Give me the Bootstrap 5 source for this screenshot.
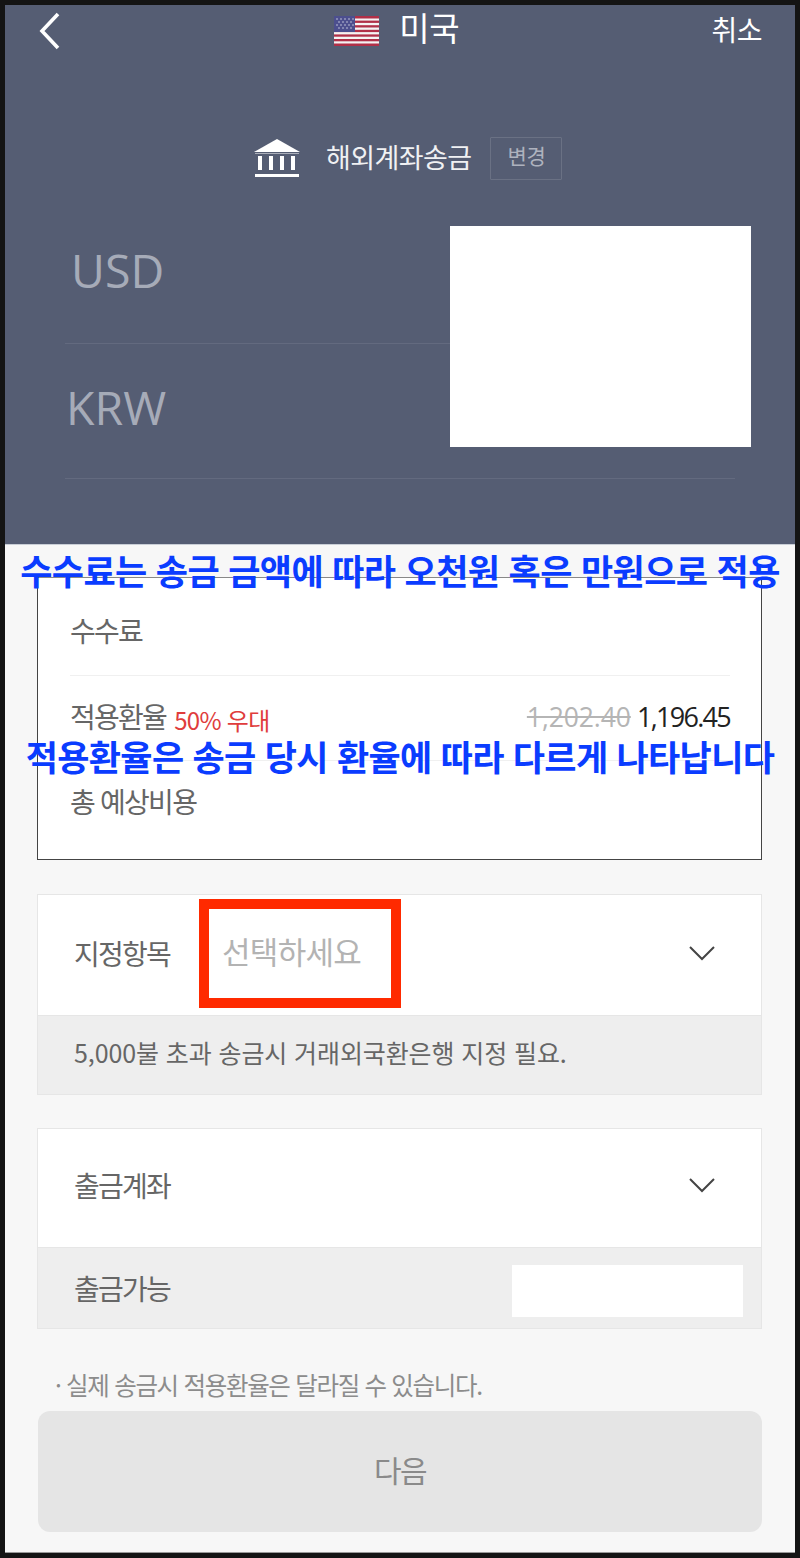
<!DOCTYPE html>
<html lang="ko">
<head>
<meta charset="utf-8">
<title>해외계좌송금</title>
<link href="https://cdn.jsdelivr.net/npm/bootstrap@5.3.0/dist/css/bootstrap.min.css" rel="stylesheet">
<style>
html,body{height:100%;}
body{background:#141414;font-family:"Noto Sans CJK KR","Noto Sans",sans-serif;margin:0;width:800px;height:1558px;overflow:hidden;}
.phone{position:relative;margin:5px 5px 0 5px;width:790px;height:1548px;background:#f7f7f7;border-bottom:1px solid #999;}
.hero{background:#555d73;height:540px;color:#fff;border-bottom:1px solid #c9ced6;}
.topbar{height:52px;padding:0 33px 0 33px;}
.back-ico{width:24px;height:38px;}
.flag-ico{width:45px;height:30px;}
.country-group{margin-left:20px;}
.nation{font-size:33px;letter-spacing:-.5px;line-height:1;margin-left:20px;padding-bottom:7px;}
.cancel{font-size:28px;letter-spacing:-.5px;padding-bottom:4px;}
.method{margin-top:79px;height:44px;padding-left:249px;}
.bank-ico{width:46px;height:40px;}
.method-name{font-size:27px;letter-spacing:-.6px;margin-left:26px;color:#f0f1f3;padding-bottom:2px;}
.change-tag{width:72px;height:43px;margin-left:19px;border:1px solid #6a7184;border-radius:1px;font-size:21px;color:#aeb2be;letter-spacing:-.4px;padding-bottom:4px;}
.currency-label{font-family:"Open Sans",sans-serif;font-size:46.5px;color:#a6abb8;line-height:1;}
.usd-row{margin-left:60px;width:385px;height:122px;padding:25px 0 0 6px;border-bottom:1px solid #636a7f;margin-top:42px;}
.krw-row{margin-left:60px;width:670px;height:135px;padding:40px 0 0 1px;border-bottom:1px solid #636a7f;}
.mask-box{position:absolute;left:445px;top:221px;width:301px;height:221px;background:#fff;}
.fee-box{margin:32px 33px 0 32px;height:283px;background:#fff;border:1px solid #444;border-top-color:#888;padding:0 31px 0 32px;color:#666;font-size:28px;letter-spacing:-1.75px;}
.fee-first{height:98px;border-bottom:1px solid #f0f0f0;padding-top:34px;line-height:1.3;}
.fee-second{height:85px;border-bottom:1px solid #f0f0f0;padding-top:22px;line-height:1.3;}
.fee-third{padding-top:22px;line-height:1.3;}
.discount{color:#e03c3c;font-size:24px;letter-spacing:-.7px;position:relative;top:2px;margin-left:2px;}
.rate-pair{margin-top:-1px;}
.old-rate{color:#b5b5b5;text-decoration:line-through;font-family:"Open Sans",sans-serif;font-size:26.5px;letter-spacing:-.1px;}
.new-rate{color:#222;font-family:"Open Sans",sans-serif;font-size:27px;letter-spacing:-1.7px;}
.select-box{margin:34px 33px 0 32px;border:1px solid #e6e6e6;background:#fff;}
.sel-row{padding:0 45px 0 36px;border-bottom:1px solid #e6e6e6;color:#666;font-size:28px;letter-spacing:-1.75px;}
.sel-first{height:121px;padding-bottom:4px;}
.sel-label{width:148px;}
.sel-hint{color:#b3b3b3;font-size:31px;letter-spacing:-.7px;padding-bottom:4px;}
.sel-row2{height:119px;padding-bottom:6px;}
.chev{width:28px;height:18px;}
.info-row{background:#eeeeee;height:78px;padding:0 36px 5px;color:#666;font-size:25px;letter-spacing:-.1px;}
.info-row2{height:80px;padding:0 18px 0 36px;font-size:28px;letter-spacing:-1.75px;}
.avail-mask{width:231px;height:52px;background:#fff;margin-top:5px;}
.second-sel{margin-top:33px;}
.notice{margin:36px 0 0 50px;height:46px;color:#8c8c8c;font-size:24.5px;letter-spacing:-1.3px;line-height:40px;}
.next-btn{display:block;margin:0 0 0 33px;width:724px;height:121px;padding-bottom:5px;background:#e5e5e5;border:0;border-radius:12px;color:#8a8a8a;font-size:30px;letter-spacing:-1.5px;}
.annot{position:absolute;left:0;width:790px;text-align:center;color:#0a3cff;font-weight:700;font-size:35px;white-space:nowrap;line-height:1;}
.annot-one{top:547px;letter-spacing:-.6px;}
.annot-two{top:733px;letter-spacing:-.67px;}
.red-mark{position:absolute;left:194px;top:894px;width:202px;height:109px;border:10px solid #ff2a00;}
</style>
</head>
<body>
<div class="phone">
  <section class="hero">
    <div class="topbar d-flex align-items-center justify-content-between">
      <svg class="back-ico" viewBox="0 0 24 38"><path d="M20 2 L4 19 L20 36" fill="none" stroke="#fff" stroke-width="3.6"/></svg>
      <div class="country-group d-flex align-items-center">
        <svg class="flag-ico" viewBox="0 0 45 30">
          <rect width="45" height="30" fill="#f4f4f4"/>
          <g fill="#b03048"><rect y="0" width="45" height="2.5"/><rect y="4.6" width="45" height="2.3"/><rect y="9.2" width="45" height="2.3"/><rect y="13.8" width="45" height="2.3"/><rect y="18.4" width="45" height="2.3"/><rect y="23" width="45" height="2.3"/><rect y="27.5" width="45" height="2.5"/></g>
          <rect width="21" height="16" fill="#4c4f8e"/>
          <g fill="#c9cbe0"><circle cx="3" cy="3" r=".8"/><circle cx="7" cy="3" r=".8"/><circle cx="11" cy="3" r=".8"/><circle cx="15" cy="3" r=".8"/><circle cx="19" cy="3" r=".8"/><circle cx="5" cy="6" r=".8"/><circle cx="9" cy="6" r=".8"/><circle cx="13" cy="6" r=".8"/><circle cx="17" cy="6" r=".8"/><circle cx="3" cy="9" r=".8"/><circle cx="7" cy="9" r=".8"/><circle cx="11" cy="9" r=".8"/><circle cx="15" cy="9" r=".8"/><circle cx="19" cy="9" r=".8"/><circle cx="5" cy="12" r=".8"/><circle cx="9" cy="12" r=".8"/><circle cx="13" cy="12" r=".8"/><circle cx="17" cy="12" r=".8"/></g>
        </svg>
        <span class="nation">미국</span>
      </div>
      <span class="cancel">취소</span>
    </div>
    <div class="method d-flex align-items-center">
      <svg class="bank-ico" viewBox="0 0 46 40">
        <path d="M23 1 L46 14 H0 Z" fill="#fff"/>
        <rect x="1" y="15" width="44" height="1" fill="#fff" opacity=".5"/>
        <rect x="4" y="18" width="4" height="14" fill="#fff"/><rect x="15" y="18" width="4" height="14" fill="#fff"/><rect x="26" y="18" width="4" height="14" fill="#fff"/><rect x="37" y="18" width="4" height="14" fill="#fff"/>
        <rect x="1" y="36" width="44" height="3" fill="#fff"/>
      </svg>
      <span class="method-name">해외계좌송금</span>
      <span class="change-tag d-flex align-items-center justify-content-center">변경</span>
    </div>
    <div class="usd-row"><div class="currency-label">USD</div></div>
    <div class="krw-row"><div class="currency-label">KRW</div></div>
  </section>
  <div class="mask-box"></div>

  <section class="fee-box">
    <div class="fee-first">수수료</div>
    <div class="fee-second d-flex justify-content-between">
      <span>적용환율 <span class="discount">50% 우대</span></span>
      <span class="rate-pair"><span class="old-rate">1,202.40</span> <span class="new-rate">1,196.45</span></span>
    </div>
    <div class="fee-third">총 예상비용</div>
  </section>

  <section class="select-box">
    <div class="sel-row sel-first d-flex align-items-center">
      <span class="sel-label">지정항목</span>
      <span class="sel-hint flex-grow-1">선택하세요</span>
      <svg class="chev" viewBox="0 0 28 18"><path d="M2 3 L14 15 L26 3" fill="none" stroke="#444" stroke-width="2"/></svg>
    </div>
    <div class="info-row d-flex align-items-center">5,000불 초과 송금시 거래외국환은행 지정 필요.</div>
  </section>

  <section class="select-box second-sel">
    <div class="sel-row sel-row2 d-flex align-items-center">
      <span class="flex-grow-1">출금계좌</span>
      <svg class="chev" viewBox="0 0 28 18"><path d="M2 3 L14 15 L26 3" fill="none" stroke="#444" stroke-width="2"/></svg>
    </div>
    <div class="info-row info-row2 d-flex align-items-center justify-content-between">
      <span>출금가능</span>
      <span class="avail-mask"></span>
    </div>
  </section>

  <p class="notice">· 실제 송금시 적용환율은 달라질 수 있습니다.</p>
  <button type="button" class="next-btn">다음</button>

  <div class="annot annot-one">수수료는 송금 금액에 따라 오천원 혹은 만원으로 적용</div>
  <div class="annot annot-two">적용환율은 송금 당시 환율에 따라 다르게 나타납니다</div>
  <div class="red-mark"></div>
</div>
<script src="https://cdn.jsdelivr.net/npm/bootstrap@5.3.0/dist/js/bootstrap.bundle.min.js"></script>
</body>
</html>
